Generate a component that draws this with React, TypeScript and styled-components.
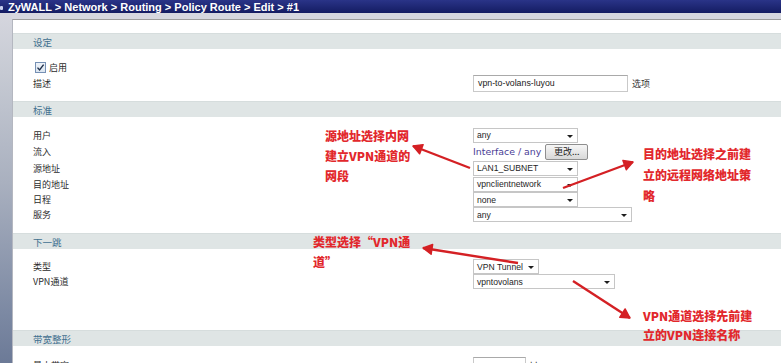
import React from "react";
import styled, { createGlobalStyle } from "styled-components";

const Global = createGlobalStyle`
  html, body { margin: 0; padding: 0; background: #fff; }
  body { font-family: "Liberation Sans", "Noto Sans CJK SC", sans-serif; }
`;

const Root = styled.div`
  position: relative;
  width: 781px;
  height: 363px;
  overflow: hidden;
  display: flex;
  flex-direction: column;
`;

const TitleBar = styled.div`
  height: 13px;
  flex: none;
  background: linear-gradient(#2a3488, #141c62);
  display: flex;
  align-items: center;
  color: #fff;
  font: bold 11px "Liberation Sans", sans-serif;
  white-space: nowrap;
`;

const TitleMark = styled.span`
  width: 3px;
  height: 4px;
  margin: 2px 5px 0 0;
  background: #c9d0ee;
  border-radius: 1px;
`;

const Body = styled.div`
  flex: 1;
  display: flex;
  min-height: 0;
`;

const SideStrip = styled.div`
  width: 12px;
  flex: none;
  background: linear-gradient(#d5d6de 0, #c6cad3 60px, #a9b0bf 170px, #7c89a3 300px, #6c7a97 100%);
`;

const Workspace = styled.div`
  flex: 1;
  display: flex;
  flex-direction: column;
  padding-top: 6px;
  background: #d6d7df;
`;

const Panel = styled.div`
  flex: 1;
  background: #fff;
  border-top: 1px solid #9c9c9c;
  border-left: 1px solid #b4b7c0;
  padding-top: 13px;
`;

const SectionHead = styled.div`
  height: 16px;
  box-sizing: border-box;
  border-top: 1px solid #d6dddd;
  background: #dfe5e5;
  padding-left: 20px;
  display: flex;
  align-items: center;
  color: #41708f;
  font: 9.5px "Noto Sans CJK SC", sans-serif;
`;

const SectionBody = styled.div<{ $top: number; $bottom: number }>`
  padding: ${(p) => p.$top}px 0 ${(p) => p.$bottom}px 0;
  display: flex;
  flex-direction: column;
`;

const Row = styled.div<{ $h: number }>`
  height: ${(p) => p.$h}px;
  display: grid;
  grid-template-columns: 440px 1fr;
  align-items: center;
  padding-left: 20px;
`;

const Label = styled.div`
  display: flex;
  align-items: center;
  color: #2c2c2c;
  font: 9px "Noto Sans CJK SC", sans-serif;
`;

const Controls = styled.div`
  display: flex;
  align-items: center;
  gap: 4px;
`;

const CheckBox = styled.span`
  width: 11px;
  height: 11px;
  box-sizing: border-box;
  margin: 0 3px 0 2px;
  border: 1px solid #7690b4;
  background: linear-gradient(#eef3f9, #dbe5f0);
  display: flex;
  align-items: center;
  justify-content: center;
`;

const TextInput = styled.div<{ $w: number }>`
  width: ${(p) => p.$w}px;
  height: 17px;
  box-sizing: border-box;
  border: 1px solid #c9c9c9;
  border-top-color: #a9a9a9;
  background: #fff;
  padding-left: 4px;
  display: flex;
  align-items: center;
  color: #222;
  font: 8.8px "Liberation Sans", sans-serif;
`;

const Hint = styled.span`
  color: #333;
  font: 9px "Noto Sans CJK SC", sans-serif;
`;

const Select = styled.div<{ $w: number }>`
  position: relative;
  width: ${(p) => p.$w}px;
  height: 15px;
  box-sizing: border-box;
  border: 1px solid #c6c6c6;
  background: #fff;
  padding-left: 3px;
  display: flex;
  align-items: center;
  color: #1e1e1e;
  font: 8.6px "Liberation Sans", sans-serif;
  &::after {
    content: "";
    position: absolute;
    right: 4px;
    top: 6px;
    border-left: 3px solid transparent;
    border-right: 3px solid transparent;
    border-top: 3px solid #1e1e1e;
  }
`;

const IfaceText = styled.span`
  color: #4a3d96;
  font: 9.4px "DejaVu Sans", sans-serif;
`;

const Button = styled.div`
  width: 43px;
  height: 16px;
  box-sizing: border-box;
  border: 1px solid #8e8e8e;
  border-radius: 2px;
  background: linear-gradient(#f6f6f6, #d8d8d8);
  display: flex;
  align-items: center;
  justify-content: center;
  color: #222;
  font: 9px "Noto Sans CJK SC", sans-serif;
`;

const Note = styled.div<{ $x: number; $y: number; $lh: number }>`
  position: absolute;
  left: ${(p) => p.$x}px;
  top: ${(p) => p.$y}px;
  line-height: ${(p) => p.$lh}px;
  color: #e2282c;
  font-family: "Noto Sans CJK SC", sans-serif;
  font-weight: 900;
  font-size: 12px;
  white-space: nowrap;
`;

const Arrows = styled.svg`
  position: absolute;
  left: 0;
  top: 0;
  pointer-events: none;
`;

type Arrow = { t: [number, number]; h: [number, number]; b1: [number, number]; b2: [number, number] };
const arrows: Arrow[] = [
  { t: [470, 168], h: [413, 146], b1: [423.2, 144.6], b2: [419.6, 153.9] },
  { t: [563, 188], h: [633, 162], b1: [626.3, 169.8], b2: [622.9, 160.4] },
  { t: [518, 263], h: [423, 248], b1: [432.7, 244.5], b2: [431.1, 254.3] },
  { t: [573, 281], h: [630, 318], b1: [619.7, 317.3], b2: [625.1, 308.9] },
];

export default function App() {
  return (
    <Root>
      <Global />
      <TitleBar>
        <TitleMark />
        ZyWALL &gt; Network &gt; Routing &gt; Policy Route &gt; Edit &gt; #1
      </TitleBar>
      <Body>
        <SideStrip />
        <Workspace>
          <Panel>
            <SectionHead>设定</SectionHead>
            <SectionBody $top={11} $bottom={9}>
              <Row $h={14}>
                <Label>
                  <CheckBox>
                    <svg width="9" height="9" viewBox="0 0 9 9">
                      <path d="M1.5 4.6 L3.6 7 L7.6 1.6" fill="none" stroke="#1f2f4a" strokeWidth="1.4" />
                    </svg>
                  </CheckBox>
                  启用
                </Label>
                <span />
              </Row>
              <Row $h={18}>
                <Label>描述</Label>
                <Controls>
                  <TextInput $w={155}>vpn-to-volans-luyou</TextInput>
                  <Hint>选项</Hint>
                </Controls>
              </Row>
            </SectionBody>

            <SectionHead>标准</SectionHead>
            <SectionBody $top={10} $bottom={11}>
              <Row $h={16}>
                <Label>用户</Label>
                <Controls>
                  <Select $w={105}>any</Select>
                </Controls>
              </Row>
              <Row $h={17}>
                <Label>流入</Label>
                <Controls>
                  <IfaceText>Interface / any</IfaceText>
                  <Button>更改...</Button>
                </Controls>
              </Row>
              <Row $h={16}>
                <Label>源地址</Label>
                <Controls>
                  <Select $w={105}>LAN1_SUBNET</Select>
                </Controls>
              </Row>
              <Row $h={16}>
                <Label>目的地址</Label>
                <Controls>
                  <Select $w={105}>vpnclientnetwork</Select>
                </Controls>
              </Row>
              <Row $h={15}>
                <Label>日程</Label>
                <Controls>
                  <Select $w={105}>none</Select>
                </Controls>
              </Row>
              <Row $h={15}>
                <Label>服务</Label>
                <Controls>
                  <Select $w={159}>any</Select>
                </Controls>
              </Row>
            </SectionBody>

            <SectionHead>下一跳</SectionHead>
            <SectionBody $top={10} $bottom={41}>
              <Row $h={15}>
                <Label>类型</Label>
                <Controls>
                  <Select $w={66}>VPN Tunnel</Select>
                </Controls>
              </Row>
              <Row $h={15}>
                <Label>VPN通道</Label>
                <Controls>
                  <Select $w={142}>vpntovolans</Select>
                </Controls>
              </Row>
            </SectionBody>

            <SectionHead>带宽整形</SectionHead>
            <SectionBody $top={11} $bottom={0}>
              <Row $h={17}>
                <Label>最大带宽</Label>
                <Controls>
                  <TextInput $w={53}>0</TextInput>
                  <Hint>kbps</Hint>
                </Controls>
              </Row>
            </SectionBody>
          </Panel>
        </Workspace>
      </Body>

      <Note $x={325} $y={126} $lh={20}>
        源地址选择内网
        <br />
        建立VPN通道的
        <br />
        网段
      </Note>
      <Note $x={643} $y={143} $lh={21}>
        目的地址选择之前建
        <br />
        立的远程网络地址策
        <br />
        略
      </Note>
      <Note $x={313} $y={232} $lh={20}>
        类型选择“VPN通
        <br />
        道”
      </Note>
      <Note $x={643} $y={306} $lh={19}>
        VPN通道选择先前建
        <br />
        立的VPN连接名称
      </Note>

      <Arrows width="781" height="363" viewBox="0 0 781 363">
        {arrows.map((a, i) => (
          <g key={i} fill="#d42024" stroke="#d42024">
            <line x1={a.t[0]} y1={a.t[1]} x2={a.h[0]} y2={a.h[1]} strokeWidth="2.4" />
            <polygon
              points={`${a.h[0]},${a.h[1]} ${a.b1[0]},${a.b1[1]} ${a.b2[0]},${a.b2[1]}`}
              strokeWidth="1.4"
              strokeLinejoin="round"
            />
          </g>
        ))}
      </Arrows>
    </Root>
  );
}
